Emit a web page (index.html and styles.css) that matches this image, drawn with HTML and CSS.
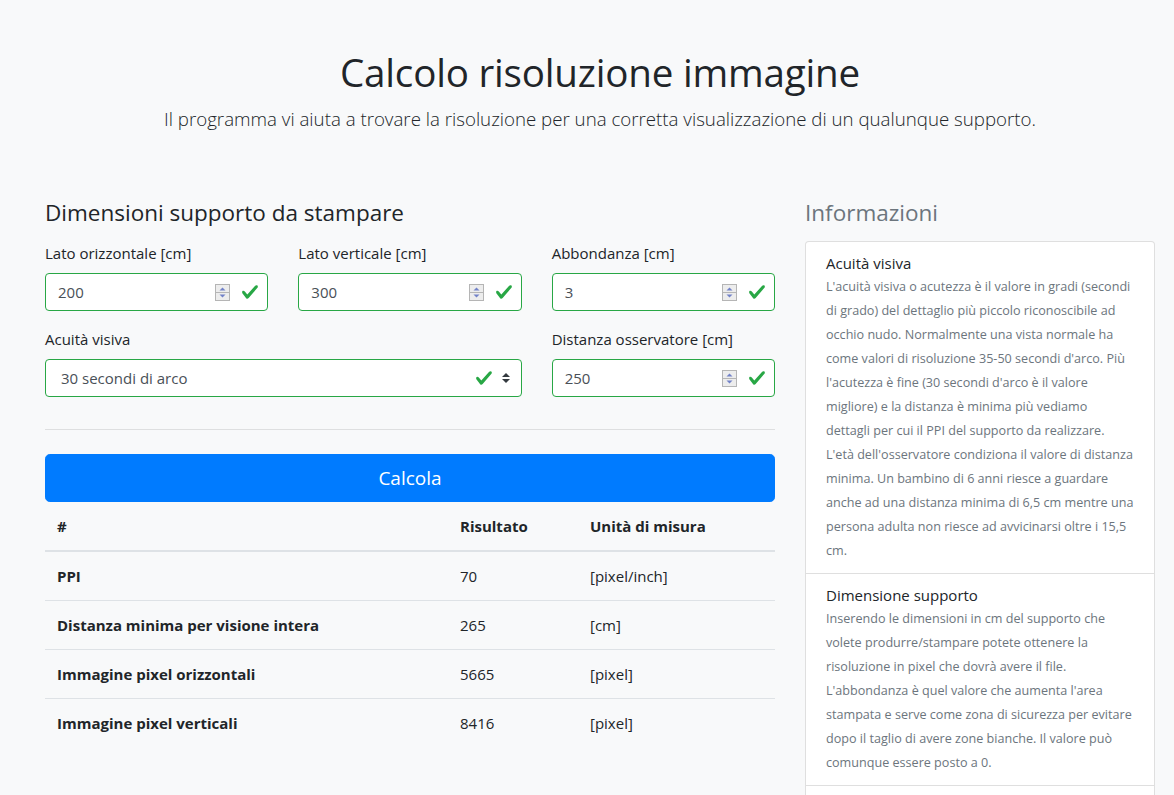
FILE: index.html
```html
<!DOCTYPE html>
<html lang="it">
<head>
<meta charset="utf-8">
<title>Calcolo risoluzione immagine</title>
<link rel="stylesheet" href="styles.css">
</head>
<body>
<div class="container">
  <header class="hero">
    <h1 class="title">Calcolo risoluzione immagine</h1>
    <p class="lead">Il programma vi aiuta a trovare la risoluzione per una corretta visualizzazione di un qualunque supporto.</p>
  </header>

  <div class="row">
    <main class="col-main">
      <h4 class="section-title">Dimensioni supporto da stampare</h4>
      <div class="form-grid">
        <div class="field">
          <label class="label">Lato orizzontale [cm]</label>
          <div class="control is-valid">
            <span class="value">200</span>
            <svg class="spin" width="15" height="17" viewBox="0 0 15 17"><rect x="0.5" y="0.5" width="14" height="16" fill="#ededed" stroke="#b5b5b5"/><line x1="0.5" y1="8.5" x2="14.5" y2="8.5" stroke="#b5b5b5"/><path d="M4.5 6.5h6l-3-3z" fill="#7282c8"/><path d="M4.5 10.5h6l-3 3z" fill="#7282c8"/></svg>
            <svg class="check" width="18" height="18" viewBox="0 0 8 8"><path fill="#28a745" d="M2.3 6.73L.6 4.53c-.4-1.04.46-1.4 1.1-.8l1.1 1.4 3.4-3.8c.6-.63 1.6-.27 1.2.7l-4 4.6c-.43.5-.8.4-1.1.1z"/></svg>
          </div>
        </div>
        <div class="field">
          <label class="label">Lato verticale [cm]</label>
          <div class="control is-valid">
            <span class="value">300</span>
            <svg class="spin" width="15" height="17" viewBox="0 0 15 17"><rect x="0.5" y="0.5" width="14" height="16" fill="#ededed" stroke="#b5b5b5"/><line x1="0.5" y1="8.5" x2="14.5" y2="8.5" stroke="#b5b5b5"/><path d="M4.5 6.5h6l-3-3z" fill="#7282c8"/><path d="M4.5 10.5h6l-3 3z" fill="#7282c8"/></svg>
            <svg class="check" width="18" height="18" viewBox="0 0 8 8"><path fill="#28a745" d="M2.3 6.73L.6 4.53c-.4-1.04.46-1.4 1.1-.8l1.1 1.4 3.4-3.8c.6-.63 1.6-.27 1.2.7l-4 4.6c-.43.5-.8.4-1.1.1z"/></svg>
          </div>
        </div>
        <div class="field">
          <label class="label">Abbondanza [cm]</label>
          <div class="control is-valid">
            <span class="value">3</span>
            <svg class="spin" width="15" height="17" viewBox="0 0 15 17"><rect x="0.5" y="0.5" width="14" height="16" fill="#ededed" stroke="#b5b5b5"/><line x1="0.5" y1="8.5" x2="14.5" y2="8.5" stroke="#b5b5b5"/><path d="M4.5 6.5h6l-3-3z" fill="#7282c8"/><path d="M4.5 10.5h6l-3 3z" fill="#7282c8"/></svg>
            <svg class="check" width="18" height="18" viewBox="0 0 8 8"><path fill="#28a745" d="M2.3 6.73L.6 4.53c-.4-1.04.46-1.4 1.1-.8l1.1 1.4 3.4-3.8c.6-.63 1.6-.27 1.2.7l-4 4.6c-.43.5-.8.4-1.1.1z"/></svg>
          </div>
        </div>
        <div class="field span-2">
          <label class="label">Acuità visiva</label>
          <div class="control select is-valid">
            <span class="value">30 secondi di arco</span>
            <svg class="check" width="18" height="18" viewBox="0 0 8 8"><path fill="#28a745" d="M2.3 6.73L.6 4.53c-.4-1.04.46-1.4 1.1-.8l1.1 1.4 3.4-3.8c.6-.63 1.6-.27 1.2.7l-4 4.6c-.43.5-.8.4-1.1.1z"/></svg>
            <svg class="caret" width="8" height="10" viewBox="0 0 4 5"><path fill="#343a40" d="M2 0L0 2h4zm0 5L0 3h4z"/></svg>
          </div>
        </div>
        <div class="field">
          <label class="label">Distanza osservatore [cm]</label>
          <div class="control is-valid">
            <span class="value">250</span>
            <svg class="spin" width="15" height="17" viewBox="0 0 15 17"><rect x="0.5" y="0.5" width="14" height="16" fill="#ededed" stroke="#b5b5b5"/><line x1="0.5" y1="8.5" x2="14.5" y2="8.5" stroke="#b5b5b5"/><path d="M4.5 6.5h6l-3-3z" fill="#7282c8"/><path d="M4.5 10.5h6l-3 3z" fill="#7282c8"/></svg>
            <svg class="check" width="18" height="18" viewBox="0 0 8 8"><path fill="#28a745" d="M2.3 6.73L.6 4.53c-.4-1.04.46-1.4 1.1-.8l1.1 1.4 3.4-3.8c.6-.63 1.6-.27 1.2.7l-4 4.6c-.43.5-.8.4-1.1.1z"/></svg>
          </div>
        </div>
      </div>

      <hr class="divider">

      <button class="btn-primary" type="button">Calcola</button>

      <table class="results">
        <colgroup><col class="c1"><col class="c2"><col class="c3"></colgroup>
        <thead>
          <tr><th>#</th><th>Risultato</th><th>Unità di misura</th></tr>
        </thead>
        <tbody>
          <tr><th>PPI</th><td>70</td><td>[pixel/inch]</td></tr>
          <tr><th>Distanza minima per visione intera</th><td>265</td><td>[cm]</td></tr>
          <tr><th>Immagine pixel orizzontali</th><td>5665</td><td>[pixel]</td></tr>
          <tr><th>Immagine pixel verticali</th><td>8416</td><td>[pixel]</td></tr>
        </tbody>
      </table>
    </main>

    <aside class="col-side">
      <h4 class="section-title muted">Informazioni</h4>
      <ul class="list-group">
        <li class="list-item">
          <h6 class="item-title">Acuità visiva</h6>
          <small class="item-text">L'acuità visiva o acutezza è il valore in gradi (secondi<br>di grado) del dettaglio più piccolo riconoscibile ad<br>occhio nudo. Normalmente una vista normale ha<br>come valori di risoluzione 35-50 secondi d'arco. Più<br>l'acutezza è fine (30 secondi d'arco è il valore<br>migliore) e la distanza è minima più vediamo<br>dettagli per cui il PPI del supporto da realizzare.<br>L'età dell'osservatore condiziona il valore di distanza<br>minima. Un bambino di 6 anni riesce a guardare<br>anche ad una distanza minima di 6,5 cm mentre una<br>persona adulta non riesce ad avvicinarsi oltre i 15,5<br>cm.</small>
        </li>
        <li class="list-item">
          <h6 class="item-title">Dimensione supporto</h6>
          <small class="item-text">Inserendo le dimensioni in cm del supporto che<br>volete produrre/stampare potete ottenere la<br>risoluzione in pixel che dovrà avere il file.<br>L'abbondanza è quel valore che aumenta l'area<br>stampata e serve come zona di sicurezza per evitare<br>dopo il taglio di avere zone bianche. Il valore può<br>comunque essere posto a 0.</small>
        </li>
        <li class="list-item list-item-empty"></li>
      </ul>
    </aside>
  </div>
</div>
</body>
</html>
```

FILE: styles.css
```css
* { box-sizing: border-box; }

html, body {
  margin: 0;
  padding: 0;
}

body {
  background: #f8f9fa;
  color: #212529;
  font-family: "Open Sans", "Noto Sans", "Liberation Sans", sans-serif;
  font-size: 16px;
  line-height: 1.5;
}

.container {
  width: 1110px;
  margin-left: 45px;
}

.hero {
  padding: 48px 0;
  text-align: center;
}

.title {
  margin: 0 0 8px;
  font-size: 38.6px;
  font-weight: 400;
  line-height: 48px;
  letter-spacing: -0.2px;
}

.lead {
  margin: 0 0 16px;
  font-size: 18.7px;
  font-weight: 300;
  line-height: 30px;
}

.row {
  display: flex;
  gap: 30px;
  align-items: flex-start;
}

.col-main { width: 730px; }
.col-side { width: 350px; }

.section-title {
  margin: 0 0 14px;
  font-size: 22.5px;
  font-weight: 400;
  line-height: 29px;
}

.section-title.muted { color: #6c757d; }

.form-grid {
  display: grid;
  grid-template-columns: repeat(3, 1fr);
  column-gap: 30px;
  row-gap: 16px;
}

.span-2 { grid-column: span 2; }

.label {
  display: block;
  margin-bottom: 8px;
  font-size: 15px;
  line-height: 24px;
}

.control {
  display: flex;
  align-items: center;
  height: 38px;
  padding: 0 8px 0 12px;
  background: #fff;
  border: 1px solid #ced4da;
  border-radius: 4px;
  color: #495057;
  font-size: 15px;
}

.control.is-valid { border-color: #28a745; }

.value { flex: 1; }

.spin { margin-right: 11px; }

.select { padding-left: 15px; padding-right: 11px; }
.select .check { margin-right: 9px; }

.divider {
  margin: 32px 0 24px;
  border: 0;
  border-top: 1px solid rgba(0, 0, 0, 0.1);
}

.btn-primary {
  display: block;
  width: 100%;
  height: 48px;
  padding: 0;
  background: #007bff;
  border: 1px solid #007bff;
  border-radius: 4.8px;
  color: #fff;
  font-family: inherit;
  font-size: 19px;
  font-weight: 400;
}

.results {
  width: 100%;
  border-collapse: collapse;
  table-layout: fixed;
  font-size: 15px;
}

.results .c1 { width: 403px; }
.results .c2 { width: 130px; }
.results .c3 { width: 197px; }

.results th,
.results td {
  padding: 12px;
  line-height: 24px;
  text-align: left;
  vertical-align: top;
  border-top: 1px solid #dee2e6;
}

.results th { font-weight: 700; }
.results td { font-weight: 400; }

.results thead th {
  border-top: 0;
  border-bottom: 2px solid #dee2e6;
}

.results tbody tr:first-child th,
.results tbody tr:first-child td { border-top: 0; }

.list-group {
  margin: 0;
  padding: 0;
  list-style: none;
  background: #fff;
  border: 1px solid rgba(0, 0, 0, 0.125);
  border-radius: 4px;
}

.list-item {
  padding: 12px 20px 10px;
  border-top: 1px solid rgba(0, 0, 0, 0.125);
}

.list-item:first-child { border-top: 0; }

.list-item-empty { min-height: 48px; }

.item-title {
  margin: 0;
  font-size: 15px;
  font-weight: 400;
  line-height: 19px;
}

.item-text {
  display: block;
  padding-top: 2px;
  color: #6c757d;
  font-size: 12.6px;
  line-height: 24px;
  white-space: nowrap;
}
```
